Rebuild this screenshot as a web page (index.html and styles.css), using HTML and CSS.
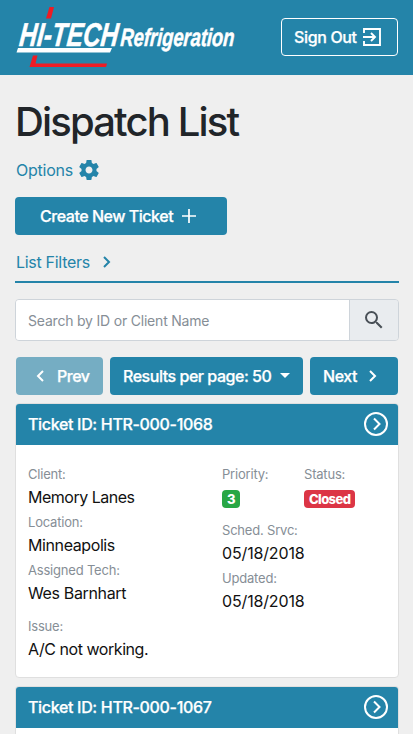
FILE: index.html
```html
<!DOCTYPE html>
<html lang="en">
<head>
<meta charset="utf-8">
<title>Dispatch List</title>
<link rel="stylesheet" href="styles.css">
</head>
<body>
<header class="topbar">
  <svg class="logo" width="230" height="66" viewBox="0 0 230 66" role="img" aria-label="Hi-Tech Refrigeration">
    <path class="red" d="M34.500 3H39L36 14.500H31Z"/>
    <path class="white" d="M3 44H97L95 48.500H1.500Z"/>
    <path class="red" d="M18 51.500H22.500L20.500 59.500H92L91 63H14.500Z"/>
    <text class="brand" transform="translate(3.500 41.500) skewX(-6)" font-size="33" textLength="99" lengthAdjust="spacingAndGlyphs">HI-TECH</text>
    <text class="brand" transform="translate(105 41.500) skewX(-4)" font-size="25" textLength="114" lengthAdjust="spacingAndGlyphs">Refrigeration</text>
  </svg>
  <a class="btn signout"><span class="t-signout">Sign Out</span><svg width="24" height="24" viewBox="0 0 24 24"><path d="M4 8V4H20V20H4V16M3 12H15M11 8L15 12L11 16" fill="none" stroke="currentColor" stroke-width="1.900"/></svg></a>
</header>
<main>
  <h1>Dispatch List</h1>
  <a class="link options"><span>Options</span><svg width="24" height="24" viewBox="0 0 24 24"><path fill="currentColor" d="M19.430 12.980c.04-.32.070-.64.070-.98s-.03-.66-.07-.98l2.110-1.650c.19-.15.240-.42.120-.64l-2-3.460c-.12-.22-.39-.3-.61-.22l-2.490 1c-.52-.4-1.080-.73-1.690-.98l-.38-2.650C14.460 2.180 14.250 2 14 2h-4c-.25 0-.46.180-.49.420l-.38 2.650c-.61.250-1.170.590-1.690.98l-2.490-1c-.23-.09-.49 0-.61.220l-2 3.460c-.13.220-.07.490.12.640l2.110 1.650c-.04.320-.07.650-.07.980s.03.660.070.980l-2.110 1.650c-.19.150-.24.420-.12.640l2 3.460c.12.220.390.300.610.220l2.490-1c.52.400 1.080.730 1.690.980l.38 2.650c.03.240.240.420.490.420h4c.25 0 .46-.18.490-.42l.38-2.650c.61-.25 1.170-.59 1.690-.98l2.490 1c.23.090.490 0 .61-.22l2-3.460c.12-.22.070-.49-.12-.64zM12 15.500c-1.930 0-3.500-1.570-3.500-3.500s1.570-3.500 3.500-3.500 3.500 1.570 3.500 3.500-1.570 3.500-3.500 3.500z"/></svg></a>
  <a class="btn create"><span class="t-create">Create New Ticket</span><svg width="16" height="16" viewBox="0 0 16 16"><path d="M8 1V15M1 8H15" fill="none" stroke="currentColor" stroke-width="1.700"/></svg></a>
  <a class="link filters"><span>List Filters</span><svg width="10" height="14" viewBox="0 0 10 14"><path d="M2 2L7 7L2 12" fill="none" stroke="currentColor" stroke-width="2"/></svg></a>
  <div class="search">
    <input type="text" placeholder="Search by ID or Client Name" aria-label="Search">
    <button type="button" aria-label="Search"><svg width="24" height="24" viewBox="0 0 24 24"><path fill="currentColor" d="M15.500 14h-.79l-.28-.27A6.471 6.471 0 0 0 16 9.500 6.500 6.500 0 1 0 9.500 16c1.610 0 3.090-.59 4.230-1.570l.27.280v.79l5 4.990L20.490 19l-4.990-5zm-6 0C7.010 14 5 11.990 5 9.500S7.010 5 9.500 5 14 7.010 14 9.500 11.990 14 9.500 14z"/></svg></button>
  </div>
  <nav class="pager">
    <a class="btn prev"><svg width="10" height="14" viewBox="0 0 10 14"><path d="M8 2L3 7L8 12" fill="none" stroke="currentColor" stroke-width="2"/></svg><span class="t-prev">Prev</span></a>
    <a class="btn results"><span class="t-results">Results per page: 50</span><i class="caret"></i></a>
    <a class="btn next"><span class="t-next">Next</span><svg width="10" height="14" viewBox="0 0 10 14"><path d="M2 2L7 7L2 12" fill="none" stroke="currentColor" stroke-width="2"/></svg></a>
  </nav>
  <article class="card">
    <h2><span>Ticket ID: HTR-000-1068</span><svg width="26" height="26" viewBox="0 0 26 26"><g fill="none" stroke="currentColor" stroke-width="2"><circle cx="13" cy="13" r="11"/><path d="M11 7.500L16.500 13L11 18.500"/></g></svg></h2>
    <dl>
      <div class="left">
        <dt>Client:</dt><dd class="v-client">Memory Lanes</dd>
        <dt>Location:</dt><dd class="v-loc">Minneapolis</dd>
        <dt>Assigned Tech:</dt><dd class="v-tech">Wes Barnhart</dd>
      </div>
      <div class="right">
        <div class="state">
          <div><dt>Priority:</dt><dd><b class="badge green">3</b></dd></div>
          <div><dt>Status:</dt><dd><b class="badge red-badge">Closed</b></dd></div>
        </div>
        <dt>Sched. Srvc:</dt><dd class="date">05/18/2018</dd>
        <dt>Updated:</dt><dd class="date">05/18/2018</dd>
      </div>
      <div class="issue"><dt>Issue:</dt><dd class="v-issue">A/C not working.</dd></div>
    </dl>
  </article>
  <article class="card following">
    <h2><span>Ticket ID: HTR-000-1067</span><svg width="26" height="26" viewBox="0 0 26 26"><g fill="none" stroke="currentColor" stroke-width="2"><circle cx="13" cy="13" r="11"/><path d="M11 7.500L16.500 13L11 18.500"/></g></svg></h2>
  </article>
</main>
</body>
</html>
```
FILE: styles.css
```css
* { box-sizing: border-box; }
body { margin: 0; background: #efefef; color: #212529; font: 16px/24px Inter, "Liberation Sans", sans-serif; letter-spacing: -0.25px; }
svg { flex: none; display: block; }
span, dt, dd { white-space: nowrap; }
.topbar { height: 75px; background: #2484a9; padding: 4px 15px 0; display: flex; justify-content: space-between; align-items: flex-start; }
.logo { overflow: visible; }
.logo .red { fill: #ed1c24; }
.logo .white, .brand { fill: #fff; }
.brand { font-family: "Liberation Sans Narrow", "Liberation Sans", sans-serif; font-weight: bold; font-style: italic; letter-spacing: 0; stroke: #fff; stroke-width: 0.5px; }
.btn { display: flex; align-items: center; height: 38px; border-radius: 4px; background: #2484a9; color: #fff; font-weight: 500; letter-spacing: -0.47px; -webkit-text-stroke: 0.25px #fff; }
.signout { width: 117px; margin-top: 14px; border: 1px solid #fff; padding-left: 12px; gap: 3px; letter-spacing: -0.35px; }
main { padding: 0 15px; }
h1 { margin: 23px 0 0; font-size: 40px; line-height: 48px; font-weight: 500; letter-spacing: -1.85px; }
.link { display: flex; color: #2484a9; padding-left: 1px; }
.options { align-items: center; height: 24px; margin-top: 12px; gap: 4px; }
.create { width: 212px; margin-top: 15px; padding-left: 25px; gap: 8px; }
.filters { align-items: flex-start; height: 48px; padding-top: 15px; border-bottom: 2px solid #2484a9; gap: 12px; letter-spacing: -0.3px; width: 384px; }
.filters svg { margin-top: 5px; }
.search { display: flex; height: 42px; margin-top: 16px; width: 384px; border: 1px solid #ced4da; border-radius: 4px; overflow: hidden; }
.search input { flex: 1; min-width: 0; border: 0; outline: 0; padding: 0 12px; background: #fff; font: 14px Inter, sans-serif; letter-spacing: -0.2px; }
.search input::placeholder { color: #868e96; opacity: 1; }
.search button { width: 49px; border: 0; border-left: 1px solid #ced4da; background: #e9ecef; color: #495057; padding: 0; display: grid; place-items: center; }
.pager { display: flex; gap: 7px; margin: 16px 0 8px 1px; }
.prev { width: 87px; padding-left: 19px; gap: 12px; background: #75adc3; }
.results { width: 193px; padding-left: 13px; gap: 9px; }
.next { width: 88px; padding-left: 13px; gap: 11px; }
.caret { margin-top: -2px; border: 5px solid transparent; border-top-color: #fff; border-bottom: 0; }
.card { width: 384px; height: 275px; margin-bottom: 8px; background: #fff; border: 1px solid #dfdfdf; border-radius: 4px; overflow: hidden; }
.following { height: 48px; margin-bottom: 0; border-bottom: 0; border-bottom-left-radius: 0; border-bottom-right-radius: 0; }
h2 { display: flex; justify-content: space-between; align-items: center; height: 41px; margin: 0; padding: 0 9px 2px 12px; background: #2484a9; color: #fff; font-size: 16px; line-height: 24px; font-weight: 500; letter-spacing: -0.33px; -webkit-text-stroke: 0.25px #fff; }
dl { display: grid; grid-template-columns: 194px 1fr; margin: 0; padding: 18px 12px; }
dt { height: 23px; line-height: 23px; font-size: 13px; color: #868e96; letter-spacing: -0.2px; }
dd { height: 25px; line-height: 22px; margin: 0; color: #111; }
.v-client { letter-spacing: -0.5px; }
.v-loc { letter-spacing: -0.4px; }
.v-tech { letter-spacing: -0.35px; }
.v-issue { letter-spacing: -0.45px; }
.date { letter-spacing: -0.15px; }
.state { display: grid; grid-template-columns: 82px 1fr; height: 56px; }
.badge { display: inline-block; height: 18px; margin-top: 4px; padding: 0 5px; border-radius: 4px; color: #fff; font-size: 13px; line-height: 18px; font-weight: 800; letter-spacing: -0.6px; vertical-align: top; }
.green { padding: 0 5px; letter-spacing: -0.3px; }
.green { background: #28a745; }
.red-badge { background: #dc3545; }
```
